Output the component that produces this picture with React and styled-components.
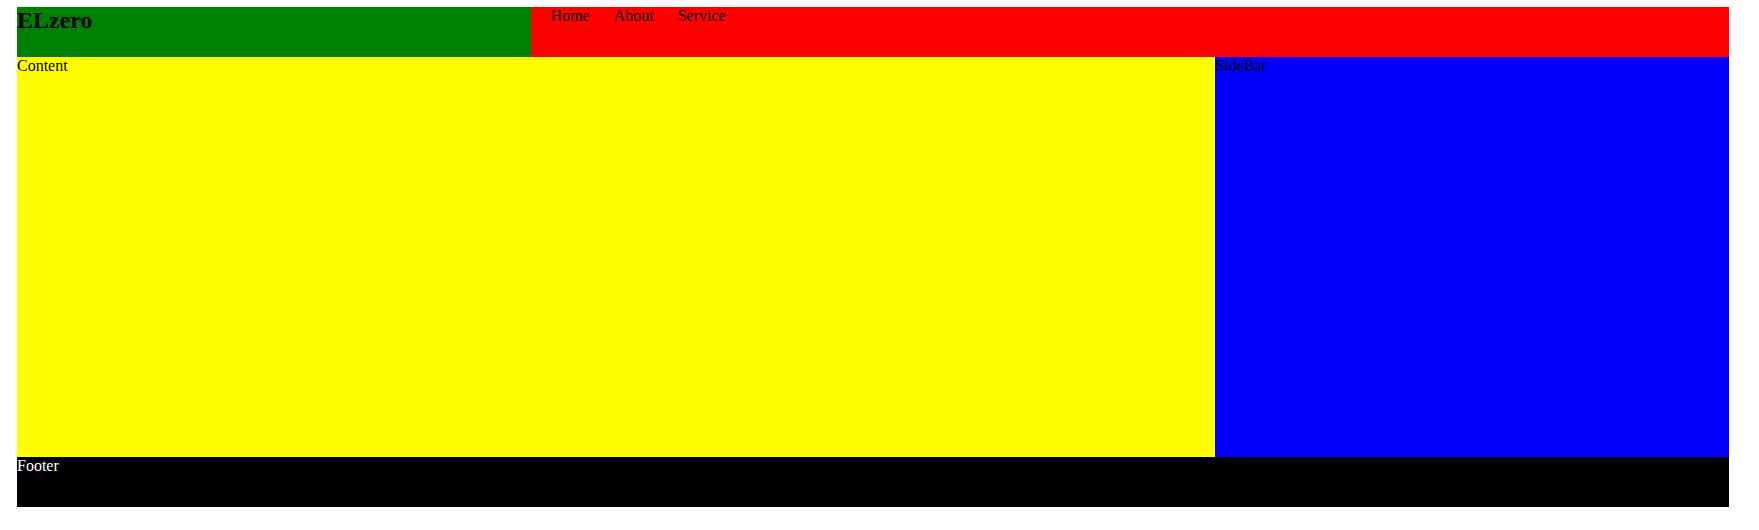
import styled, { createGlobalStyle } from 'styled-components'

const GlobalStyle = createGlobalStyle`
  body {
    margin: 0;
    font-family: 'Liberation Serif', 'Times New Roman', serif;
    font-size: 16px;
    background: #fff;
  }
`

const Page = styled.div`
  display: grid;
  grid-template-columns: 3fr 4fr 3fr;
  grid-template-rows: 50px 400px 50px;
  grid-template-areas:
    'logo nav nav'
    'content content sidebar'
    'footer footer footer';
  width: 1712px;
  margin: 7px 0 0 17px;
`

const Logo = styled.h2`
  grid-area: logo;
  margin: 0;
  font-size: 24px;
  font-weight: bold;
  background: green;
`

const Nav = styled.ul`
  grid-area: nav;
  display: flex;
  gap: 24px;
  margin: 0;
  padding: 0 0 0 20px;
  list-style: none;
  background: red;
`

const NavItem = styled.li`
  color: #000;
`

const Section = styled.div`
  grid-area: ${({ area }) => area};
  background: ${({ bg }) => bg};
  color: ${({ fg }) => fg || '#000'};
`

export default function App () {
  return (
    <>
      <GlobalStyle />
      <Page>
        <Logo>ELzero</Logo>
        <Nav>
          <NavItem>Home</NavItem>
          <NavItem>About</NavItem>
          <NavItem>Service</NavItem>
        </Nav>
        <Section area='content' bg='yellow'>Content</Section>
        <Section area='sidebar' bg='blue'>SideBar</Section>
        <Section area='footer' bg='black' fg='#fff'>Footer</Section>
      </Page>
    </>
  )
}
